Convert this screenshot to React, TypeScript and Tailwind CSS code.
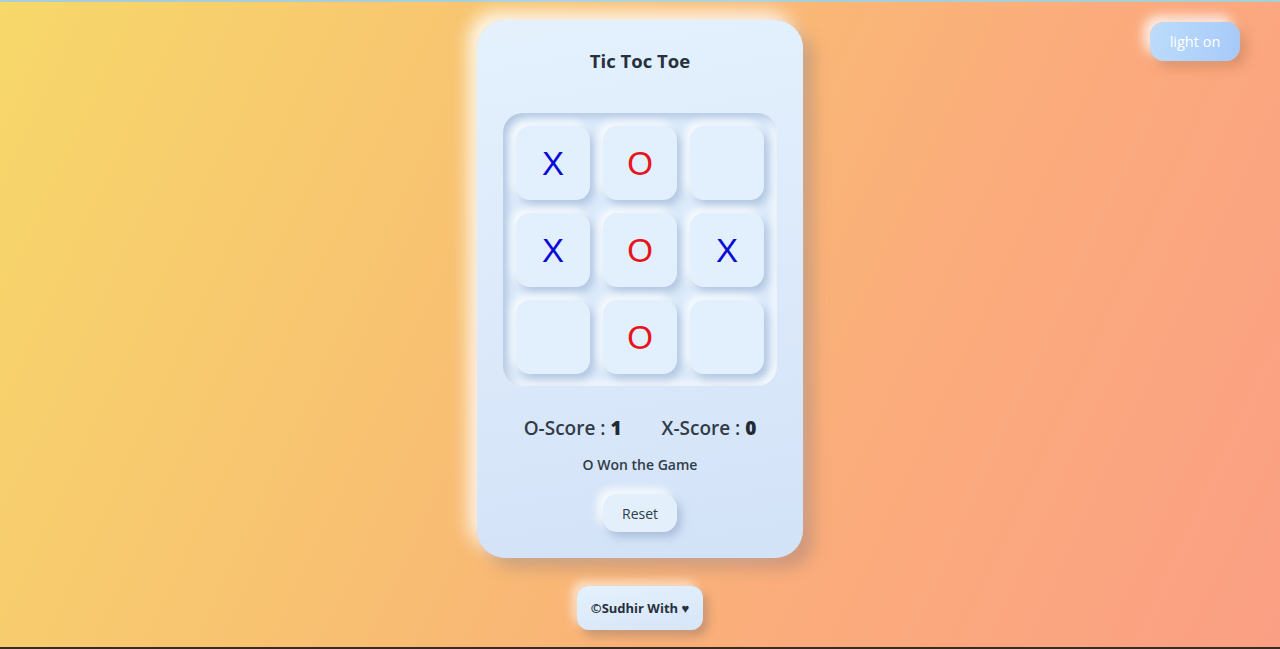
const board = ['X', 'O', '', 'X', 'O', 'X', '', 'O', '']

const Cell = ({ value }: { value: string }) => (
  <div className="w-[74px] h-[74px] rounded-[14px] bg-[#e2effc] shadow-[4px_5px_8px_rgba(140,165,200,0.55),-4px_-4px_8px_rgba(255,255,255,0.9)] flex items-center justify-center">
    <span
      className={`font-['Liberation_Sans',Arial,sans-serif] text-[33px] leading-none ${value === 'X' ? 'text-[#0a0ad8]' : 'text-[#e8141c]'}`}
    >
      {value}
    </span>
  </div>
)

export default function App() {
  return (
    <div className="relative h-[649px] w-full overflow-hidden bg-[linear-gradient(115deg,#f7d86a_0%,#f8bf72_40%,#fbab7c_70%,#fb9f84_100%)] font-['Open_Sans','Noto_Sans',sans-serif] text-[#2b3440]">
      {/* top edge */}
      <div className="h-[2px] bg-[#a9cfd6]" />

      {/* light toggle */}
      <button className="absolute right-[40px] top-[22px] w-[90px] h-[39px] rounded-[14px] bg-[linear-gradient(100deg,#bddcfb,#a6c9f9)] text-white text-[14.5px] shadow-[6px_6px_12px_rgba(180,120,80,0.45),-6px_-6px_12px_rgba(255,255,255,0.85)]">
        light on
      </button>

      <div className="flex flex-col items-center pt-[18px]">
        {/* card */}
        <div className="w-[326px] h-[538px] rounded-[28px] bg-[linear-gradient(170deg,#e4f1fd_0%,#dae8fa_60%,#d2e2f7_100%)] shadow-[10px_10px_16px_rgba(120,110,120,0.35),-8px_-8px_18px_rgba(255,255,255,0.9)] flex flex-col items-center">
          <h1 className="mt-[28px] text-[18.5px] leading-[26px] font-bold text-[#27313d]">Tic Toc Toe</h1>

          {/* board */}
          <div className="mt-[39px] w-[274px] h-[273px] rounded-[20px] bg-[#dcebfb] shadow-[inset_4px_4px_8px_rgba(140,165,200,0.55),inset_-4px_-4px_8px_rgba(255,255,255,0.9)] p-[13px] grid grid-cols-3 gap-[13px]">
            {board.map((v, i) => (
              <Cell key={i} value={v} />
            ))}
          </div>

          {/* scores */}
          <div className="mt-[29px] flex gap-[40px] text-[19px] leading-[26px] font-semibold text-[#323c48]">
            <span>
              O-Score : <b className="font-extrabold text-[#222a33]">1</b>
            </span>
            <span>
              X-Score : <b className="font-extrabold text-[#222a33]">0</b>
            </span>
          </div>

          <p className="mt-[14px] text-[14px] leading-[20px] font-semibold text-[#323c48]">O Won the Game</p>

          <button className="mt-[19px] w-[74px] h-[38px] rounded-[14px] bg-[#e3f0fc] text-[14px] text-[#323c48] shadow-[4px_5px_8px_rgba(140,165,200,0.6),-5px_-5px_10px_rgba(255,255,255,0.95)]">
            Reset
          </button>
        </div>

        {/* footer */}
        <div className="mt-[28px] w-[126px] h-[44px] rounded-[12px] bg-[linear-gradient(170deg,#e4f1fd,#d6e5f8)] flex items-center justify-center pt-[2px] text-[13px] font-bold text-[#27313d] shadow-[5px_6px_10px_rgba(140,110,100,0.45),-5px_-5px_10px_rgba(255,255,255,0.6)]">
          ©Sudhir With ♥
        </div>
      </div>

      <div className="absolute bottom-0 left-0 right-0 h-[2px] bg-[#3a2a22]" />
    </div>
  )
}
